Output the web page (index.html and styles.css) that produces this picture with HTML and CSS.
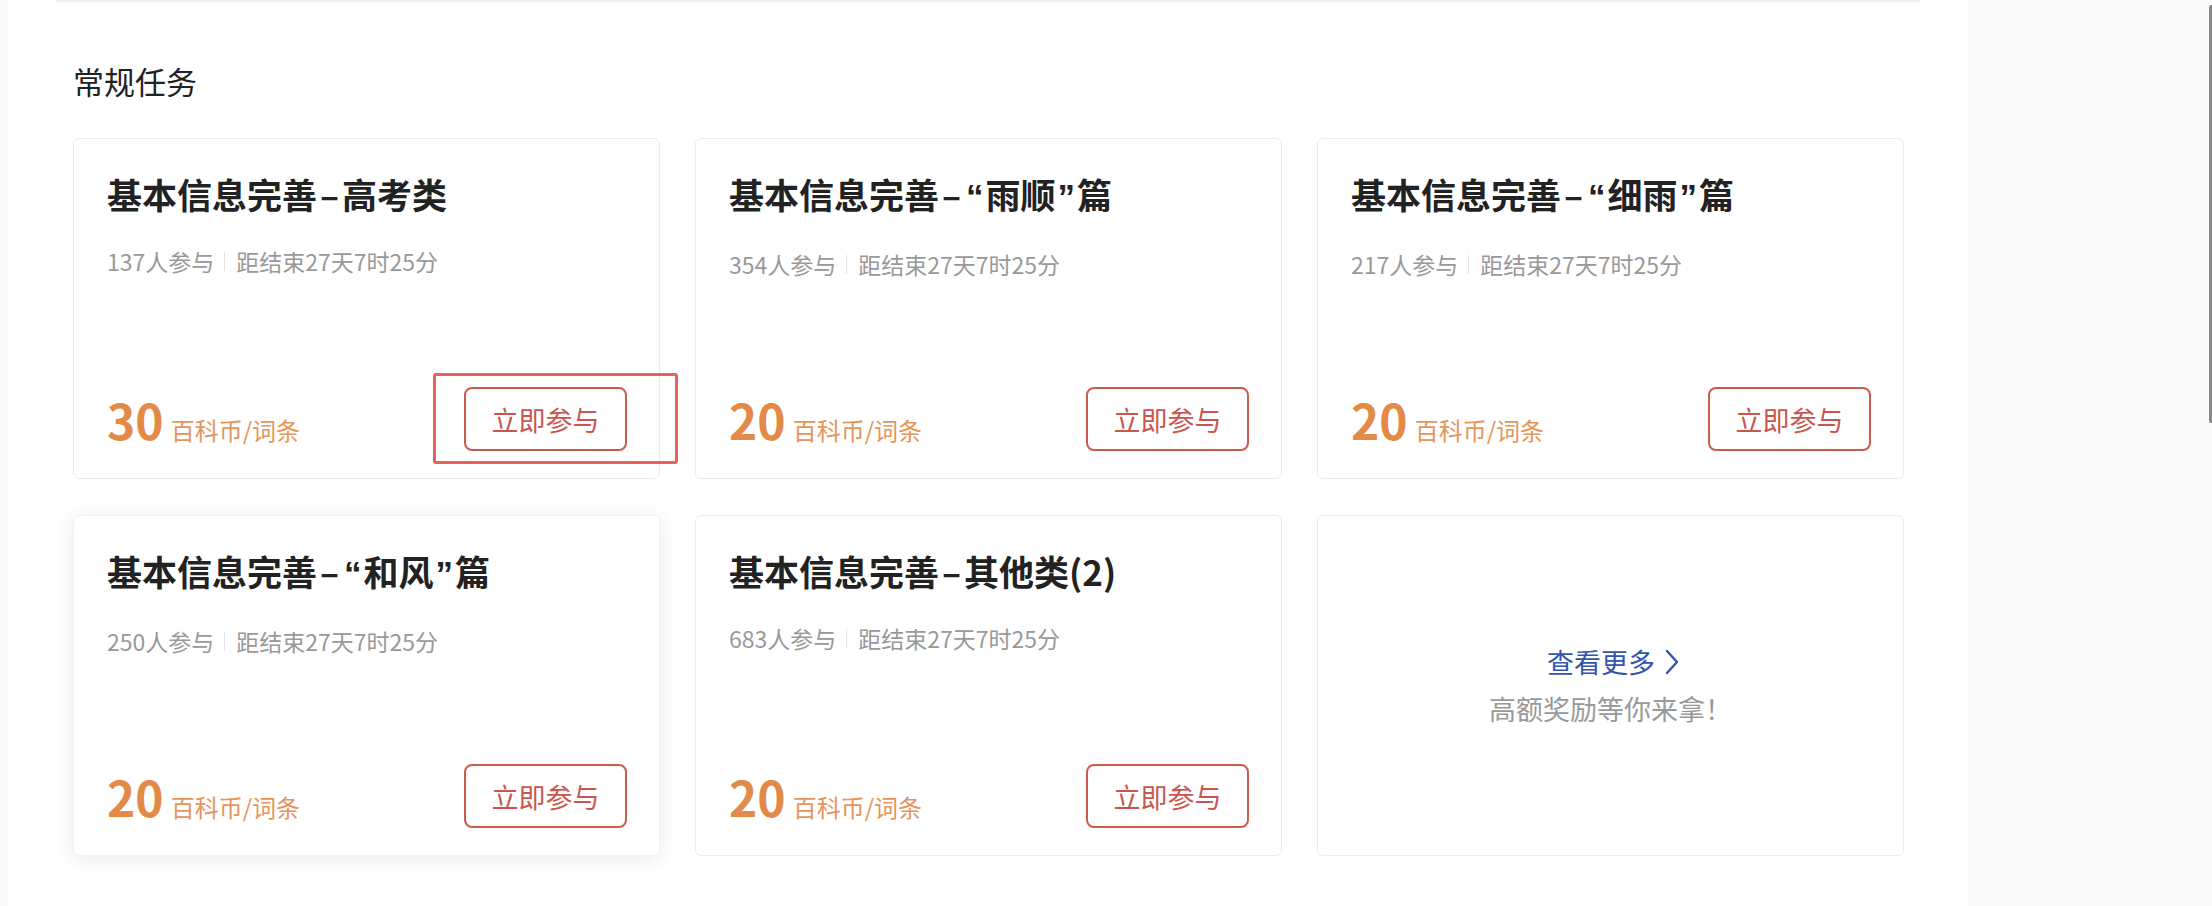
FILE: index.html
```html
<!DOCTYPE html>
<html lang="zh-CN">
<head>
<meta charset="utf-8">
<title>常规任务</title>
<link rel="stylesheet" href="styles.css">
</head>
<body>
<div class="page">
  <main class="panel">
    <div class="top-rule"></div>
    <section class="section">
      <h2 class="section-title">常规任务</h2>
      <div class="grid">
        <div class="card">
          <h3 class="card-title">基本信息完善<span class="dash">–</span>高考类</h3>
          <div class="meta"><span>137人参与</span><i class="sep"></i><span>距结束27天7时25分</span></div>
          <div class="footer">
            <div class="price"><span class="num">30</span><span class="unit">百科币/词条</span></div>
            <div class="btn-wrap"><button class="btn">立即参与</button><span class="highlight"></span></div>
          </div>
        </div>
        <div class="card">
          <h3 class="card-title">基本信息完善<span class="dash">–</span><span class="q">“</span>雨顺<span class="q">”</span>篇</h3>
          <div class="meta"><span>354人参与</span><i class="sep"></i><span>距结束27天7时25分</span></div>
          <div class="footer">
            <div class="price"><span class="num">20</span><span class="unit">百科币/词条</span></div>
            <div class="btn-wrap"><button class="btn">立即参与</button></div>
          </div>
        </div>
        <div class="card">
          <h3 class="card-title">基本信息完善<span class="dash">–</span><span class="q">“</span>细雨<span class="q">”</span>篇</h3>
          <div class="meta"><span>217人参与</span><i class="sep"></i><span>距结束27天7时25分</span></div>
          <div class="footer">
            <div class="price"><span class="num">20</span><span class="unit">百科币/词条</span></div>
            <div class="btn-wrap"><button class="btn">立即参与</button></div>
          </div>
        </div>
        <div class="card card-hover">
          <h3 class="card-title">基本信息完善<span class="dash">–</span><span class="q">“</span>和风<span class="q">”</span>篇</h3>
          <div class="meta"><span>250人参与</span><i class="sep"></i><span>距结束27天7时25分</span></div>
          <div class="footer">
            <div class="price"><span class="num">20</span><span class="unit">百科币/词条</span></div>
            <div class="btn-wrap"><button class="btn">立即参与</button></div>
          </div>
        </div>
        <div class="card">
          <h3 class="card-title">基本信息完善<span class="dash">–</span>其他类(2)</h3>
          <div class="meta"><span>683人参与</span><i class="sep"></i><span>距结束27天7时25分</span></div>
          <div class="footer">
            <div class="price"><span class="num">20</span><span class="unit">百科币/词条</span></div>
            <div class="btn-wrap"><button class="btn">立即参与</button></div>
          </div>
        </div>
        <div class="card card-more">
          <a class="more-link">查看更多<svg class="chev" width="16" height="26" viewBox="0 0 16 26"><path d="M3 2 L13 13 L3 24" fill="none" stroke="#3356a8" stroke-width="2.4" stroke-linecap="round" stroke-linejoin="round"/></svg></a>
          <div class="more-sub">高额奖励等你来拿！</div>
        </div>
      </div>
    </section>
  </main>
  <aside class="side">
    <div class="scroll-thumb"></div>
  </aside>
</div>
</body>
</html>
```

FILE: styles.css
```css
* { box-sizing: border-box; }
html, body { margin: 0; padding: 0; }
body {
  background: #f9f9f9;
  font-family: "Noto Sans CJK SC", "Noto Sans", sans-serif;
  color: #222;
  overflow: hidden;
}
.page {
  display: flex;
  height: 906px;
}
.panel {
  margin-left: 8px;
  width: 1960px;
  background: #fff;
  height: 906px;
}
.top-rule {
  height: 2px;
  margin: 0 48px;
  background: #eeeeee;
}
.section {
  padding: 0 63px 0 65px;
}
.section-title {
  margin: 59px 0 37px;
  font-size: 31px;
  line-height: 40px;
  font-weight: 400;
  color: #222;
}
.grid {
  display: grid;
  grid-template-columns: repeat(3, 587px);
  grid-auto-rows: 341px;
  column-gap: 35px;
  row-gap: 36px;
}
.card {
  position: relative;
  display: flex;
  flex-direction: column;
  border: 1px solid #ececec;
  border-radius: 6px;
  padding: 31px 32px 27px 33px;
  background: #fff;
}
.card-hover {
  border-color: #f2f2f2;
  box-shadow: 0 3px 20px rgba(0, 0, 0, 0.09);
}
.card-title {
  margin: 0;
  font-size: 35px;
  line-height: 48px;
  font-weight: 700;
  color: #222;
}
.dash {
  margin: 0 3px;
}
.q {
  font-family: "Liberation Sans", sans-serif;
  padding: 0 2px;
}
.meta {
  margin-top: 28px;
  display: flex;
  align-items: center;
  font-size: 23px;
  line-height: 30px;
  color: #999;
}
.sep {
  display: block;
  width: 1px;
  height: 19px;
  background: #e3e3e3;
  margin: 0 11px 0 10px;
}
.footer {
  margin-top: auto;
  display: flex;
  align-items: center;
  justify-content: space-between;
}
.price {
  display: flex;
  align-items: baseline;
  color: #e38a49;
}
.num {
  font-size: 48px;
  font-weight: 700;
  line-height: 56px;
  margin-right: 7px;
}
.unit {
  font-size: 24px;
  line-height: 30px;
  color: #e5955a;
}
.btn-wrap {
  position: relative;
}
.btn {
  display: block;
  width: 163px;
  height: 64px;
  border: 2px solid #cd5a51;
  border-radius: 8px;
  background: #fff;
  color: #c9564e;
  font-family: "Noto Sans CJK SC", sans-serif;
  font-size: 27px;
  line-height: 1;
  padding: 0;
}
.highlight {
  position: absolute;
  left: -31px;
  top: -14px;
  right: -51px;
  bottom: -13px;
  border: 3px solid #e8625b;
  border-radius: 3px;
  pointer-events: none;
}
.card-more {
  align-items: center;
  justify-content: center;
  padding: 0;
}
.more-link {
  display: flex;
  align-items: center;
  font-size: 27px;
  line-height: 40px;
  color: #3356a8;
  text-decoration: none;
  margin-left: 6px;
}
.chev {
  margin-left: 9px;
}
.more-sub {
  margin-top: 7px;
  font-size: 27px;
  line-height: 40px;
  color: #999;
}
.side {
  flex: 1;
  display: flex;
  justify-content: flex-end;
  background: #f9f9f9;
}
.scroll-thumb {
  width: 3px;
  height: 418px;
  margin-top: 5px;
  background: #8a8a8a;
  border-radius: 2px 0 0 2px;
}
```
